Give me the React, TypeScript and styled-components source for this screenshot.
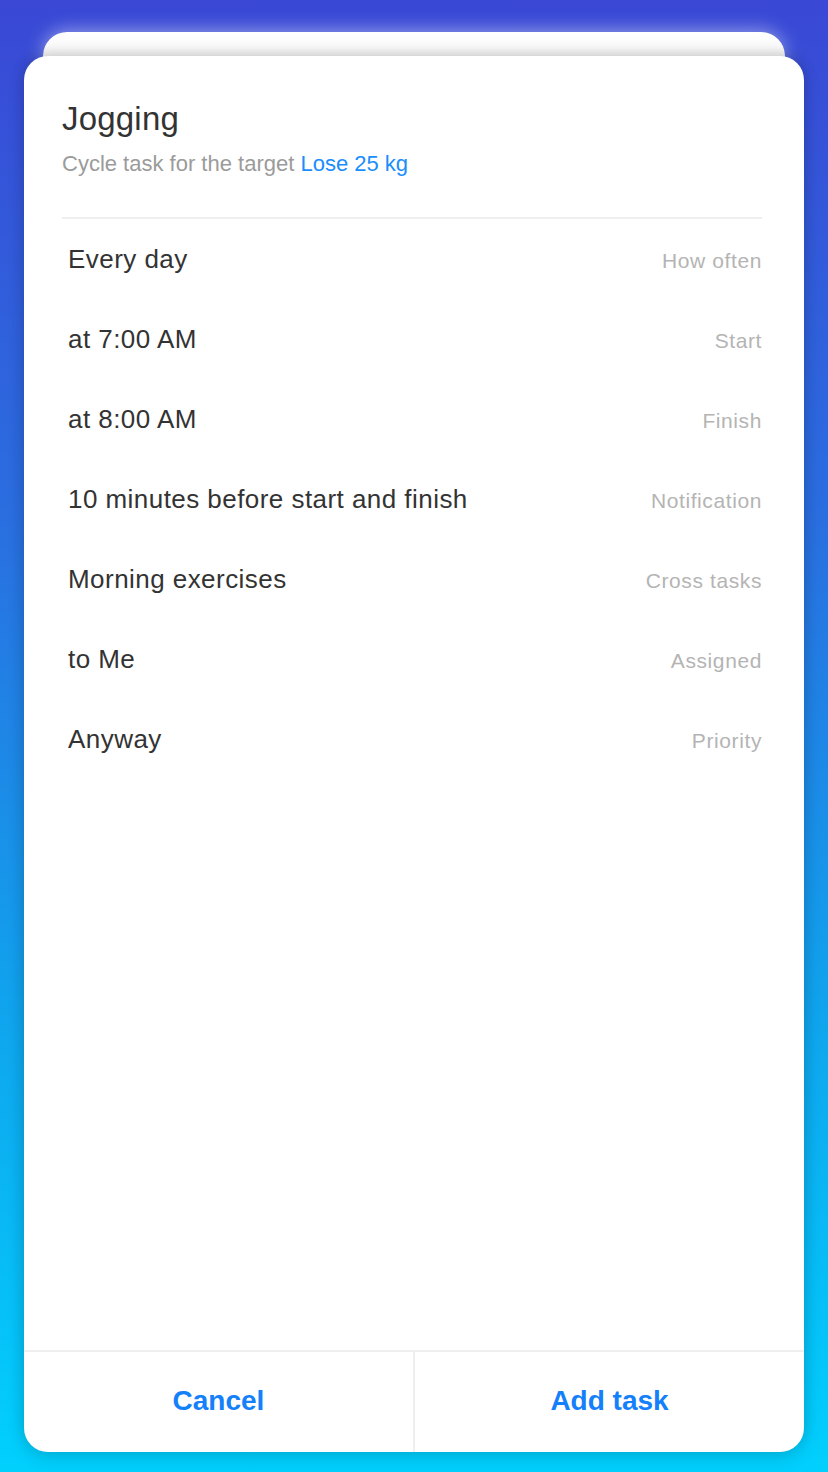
import React from "react";
import styled, { createGlobalStyle } from "styled-components";

const GlobalStyle = createGlobalStyle`
  html, body {
    margin: 0;
    padding: 0;
  }
  body {
    font-family: "Liberation Sans", Arial, sans-serif;
    -webkit-font-smoothing: antialiased;
  }
  * { box-sizing: border-box; }
`;

const Page = styled.div`
  width: 828px;
  height: 1472px;
  padding: 32px 24px 20px;
  background: linear-gradient(180deg, #3a48d5 0%, #2a6ee0 35%, #0fa6ee 70%, #01d0fd 100%);
  display: flex;
  flex-direction: column;
  overflow: hidden;
`;

const BackCard = styled.div`
  height: 40px;
  margin: 0 19px;
  border-radius: 24px 24px 0 0;
  background: linear-gradient(180deg, #ffffff 0%, #fbfbfb 40%, #e3e3e3 100%);
  box-shadow: 0 -2px 18px rgba(255, 255, 255, 0.45);
`;

const Card = styled.div`
  position: relative;
  z-index: 1;
  margin-top: -16px;
  height: 1396px;
  background: #ffffff;
  border-radius: 24px;
  box-shadow: 0 -4px 14px rgba(0, 0, 0, 0.12), 0 6px 18px rgba(0, 0, 0, 0.12);
  display: flex;
  flex-direction: column;
  overflow: hidden;
`;

const Header = styled.header`
  padding: 43px 42px 0 38px;
`;

const Title = styled.h1`
  margin: 0;
  font-size: 33px;
  line-height: 40px;
  font-weight: 400;
  color: #333333;
  letter-spacing: 0.2px;
`;

const Subtitle = styled.p`
  margin: 12px 0 0;
  font-size: 22px;
  line-height: 26px;
  color: #9b9b9b;
`;

const Link = styled.a`
  color: #1a8efc;
  text-decoration: none;
`;

const Divider = styled.hr`
  margin: 40px 0 0;
  border: none;
  height: 2px;
  background: #efefef;
`;

const List = styled.div`
  display: flex;
  flex-direction: column;
  padding: 0 42px 0 44px;
  flex: 1;
`;

const Row = styled.div`
  height: 80px;
  padding-top: 25px;
  display: flex;
  align-items: baseline;
  justify-content: space-between;
`;

const Value = styled.span`
  font-size: 26px;
  line-height: 30px;
  color: #333333;
  letter-spacing: 0.45px;
`;

const Label = styled.span`
  font-size: 21px;
  line-height: 30px;
  color: #b4b4b4;
  letter-spacing: 0.6px;
`;

const Footer = styled.footer`
  height: 102px;
  border-top: 2px solid #efefef;
  display: grid;
  grid-template-columns: 1fr 2px 1fr;
`;

const Separator = styled.div`
  background: #efefef;
`;

const ActionButton = styled.button`
  border: none;
  background: transparent;
  font-family: "Liberation Sans", Arial, sans-serif;
  font-size: 28px;
  font-weight: 700;
  color: #1480fa;
  cursor: pointer;
  padding: 0 0 2px;
`;

const rows = [
  { value: "Every day", label: "How often" },
  { value: "at 7:00 AM", label: "Start" },
  { value: "at 8:00 AM", label: "Finish" },
  { value: "10 minutes before start and finish", label: "Notification" },
  { value: "Morning exercises", label: "Cross tasks" },
  { value: "to Me", label: "Assigned" },
  { value: "Anyway", label: "Priority" },
];

export default function App() {
  return (
    <>
      <GlobalStyle />
      <Page>
        <BackCard />
        <Card>
          <Header>
            <Title>Jogging</Title>
            <Subtitle>
              Cycle task for the target <Link href="#">Lose 25 kg</Link>
            </Subtitle>
            <Divider />
          </Header>
          <List>
            {rows.map((r) => (
              <Row key={r.label}>
                <Value>{r.value}</Value>
                <Label>{r.label}</Label>
              </Row>
            ))}
          </List>
          <Footer>
            <ActionButton>Cancel</ActionButton>
            <Separator />
            <ActionButton>Add task</ActionButton>
          </Footer>
        </Card>
      </Page>
    </>
  );
}
